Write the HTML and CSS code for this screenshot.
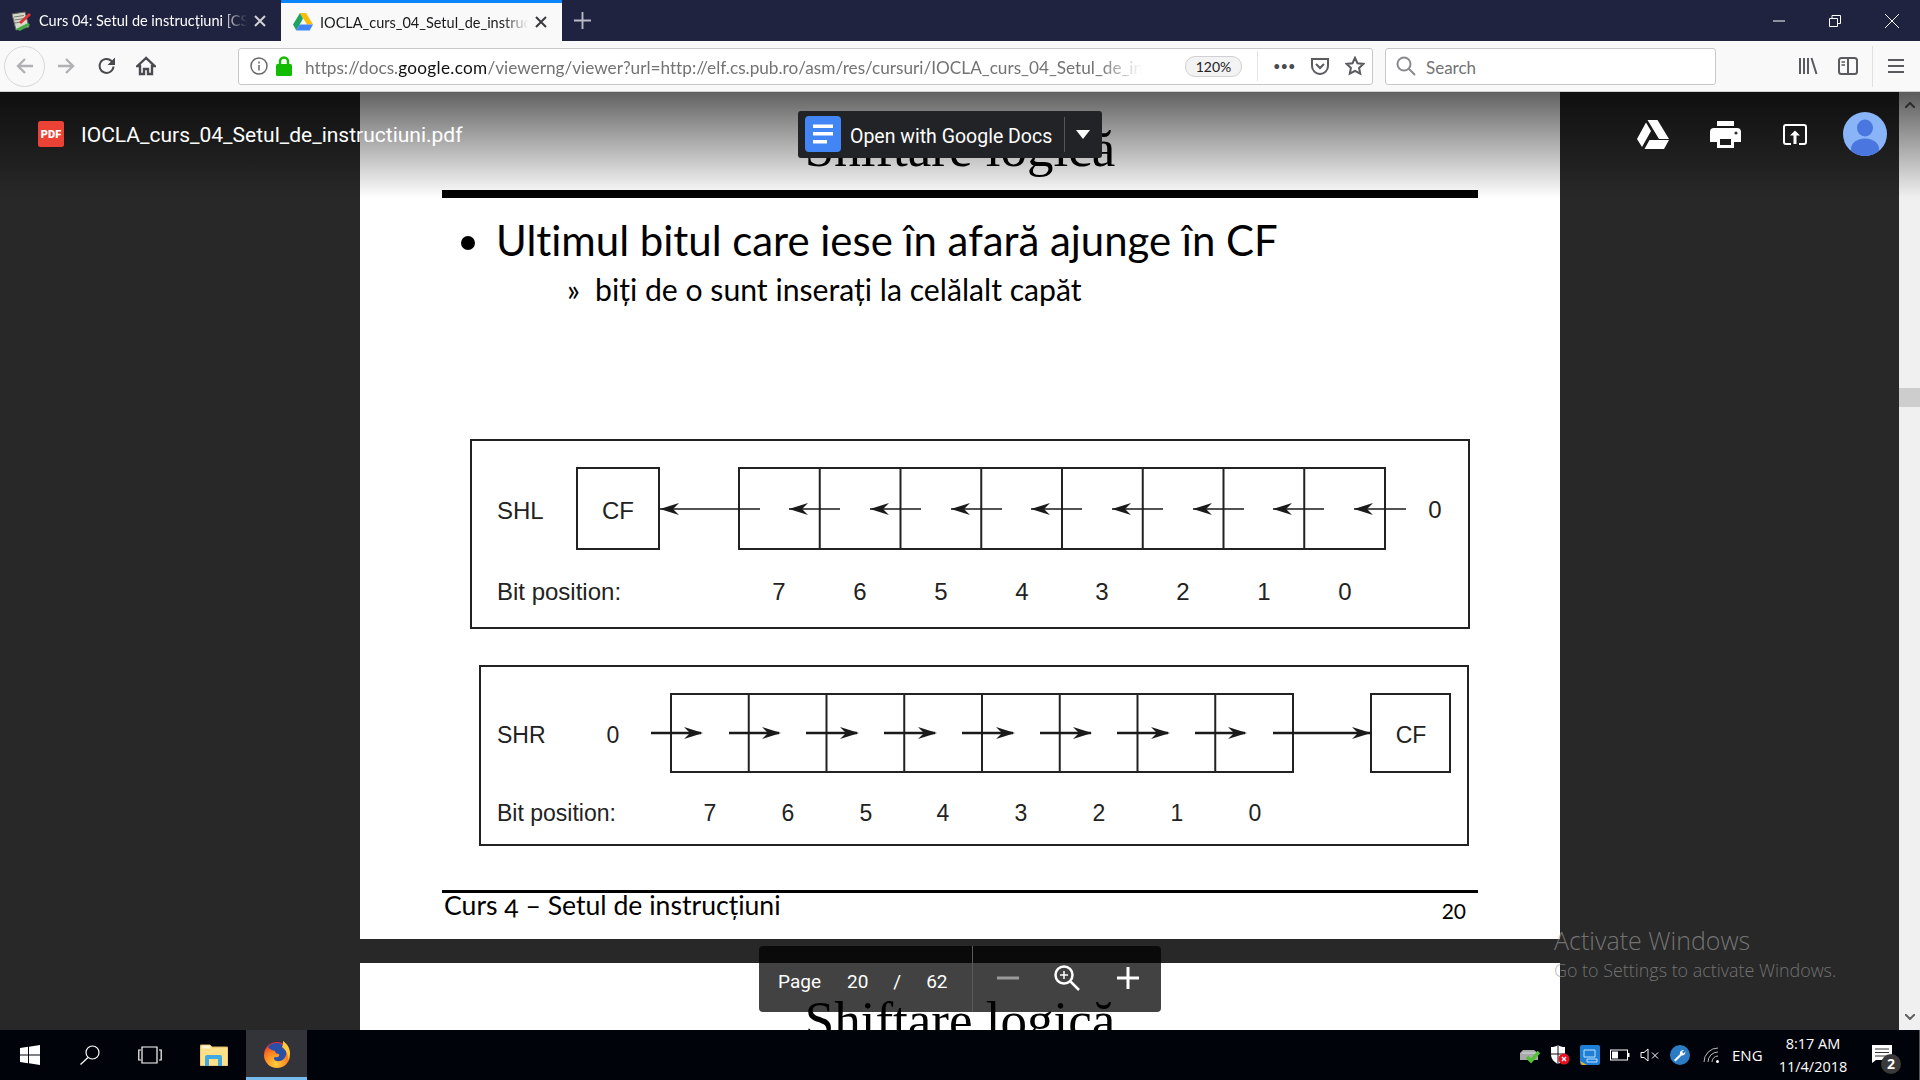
FILE: index.html
```html
<!DOCTYPE html>
<html lang="ro">

<head>
  <meta charset="UTF-8" />
  <title>IOCLA_curs_04_Setul_de_instructiuni.pdf</title>
  <link rel="stylesheet" href="styles.css">
</head>

<body>
  <!-- Firefox tabs -->
  <div class="tab-bar">
    <div class="tab">
      <svg class="favicon" viewBox="0 0 20 20">
        <path d="M1 3l13-2 4 15-13 3z" fill="#d8d8c8" stroke="#666" />
        <path d="M3 6l10-1.500M3.500 9l10-1.500M4 12l6-1" stroke="#777" />
        <path d="M8 11l10-9 2 2-10 9z" fill="#d33" />
        <path d="M5 18l12-6 2 2-10 6z" fill="#4a4" />
      </svg>
      <span class="tab-title">Curs 04: Setul de instrucțiuni [CS Open CourseWare]</span>
      <svg class="tab-close" viewBox="0 0 12 12"><path d="M1 1l10 10M11 1L1 11" /></svg>
    </div>
    <div class="tab tab-active">
      <svg class="favicon" viewBox="0 0 20 18">
        <path d="M7 0h6l7 11.500h-6z" fill="#fbbc04" />
        <path d="M7 0l3 5.500L3.300 17.500 0 11.500z" fill="#1ea362" />
        <path d="M3.300 17.500L6.600 11.500H20l-3.300 6z" fill="#4285f4" />
      </svg>
      <span class="tab-title">IOCLA_curs_04_Setul_de_instructiuni.pdf</span>
      <svg class="tab-close" viewBox="0 0 12 12"><path d="M1 1l10 10M11 1L1 11" /></svg>
    </div>
    <svg class="new-tab" viewBox="0 0 18 18"><path d="M9 0v18M0 9h18" /></svg>
    <div class="window-buttons">
      <svg viewBox="0 0 12 12"><path d="M0 6h12" /></svg>
      <svg viewBox="0 0 12 12"><path d="M.5 3.500h8v8h-8zM3 3.500V.5h8.500v8H8.500" /></svg>
      <svg viewBox="0 0 14 14"><path d="M0 0l14 14M14 0L0 14" /></svg>
    </div>
  </div>

  <!-- Firefox toolbar -->
  <div class="nav-bar">
    <div class="back-btn">
      <svg class="nav-icon" viewBox="0 0 20 20"><path class="off" d="M18 10H3M10 3l-7 7 7 7" /></svg>
    </div>
    <svg class="nav-icon forward-icon" viewBox="0 0 20 20"><path class="off" d="M2 10h15M10 3l7 7-7 7" /></svg>
    <svg class="nav-icon reload-icon" viewBox="0 0 20 20">
      <path d="M16.500 10.500a7 7 0 1 1-2-5.500l2.500 2.500" />
      <path class="solid" d="M18 1.500V9h-7.500z" />
    </svg>
    <svg class="nav-icon home-icon" viewBox="0 0 20 20">
      <path d="M10 2L1.500 10h2.500v8h4v-5h4v5h4v-8h2.500z" />
    </svg>

    <div class="url-box">
      <svg class="info-icon" viewBox="0 0 18 18">
        <circle cx="9" cy="9" r="8" />
        <path d="M9 8v5.500M9 4.500v2" />
      </svg>
      <svg class="lock-icon" viewBox="0 0 16 20">
        <path d="M4 9V5.500a4 4 0 0 1 8 0V9" />
        <rect x="0" y="8" width="16" height="12" rx="1.500" />
      </svg>
      <span class="url-text">https://docs.<b>google.com</b>/viewerng/viewer?url=http://elf.cs.pub.ro/asm/res/cursuri/IOCLA_curs_04_Setul_de_instructiuni.pdf</span>
      <span class="zoom-pill">120%</span>
      <span class="url-sep"></span>
      <span class="more-dots">•••</span>
      <svg class="pocket-icon" viewBox="0 0 20 20">
        <path d="M2 3h16v7a8 8 0 0 1-16 0z" />
        <path d="M6 8l4 4 4-4" />
      </svg>
      <svg class="star-icon" viewBox="0 0 20 20">
        <path d="M10 1.800l2.500 5.400 5.900.7-4.300 4 1.100 5.800L10 14.800l-5.200 2.900 1.100-5.800-4.300-4 5.900-.7z" />
      </svg>
    </div>

    <div class="search-box">
      <svg class="search-icon" viewBox="0 0 20 20">
        <circle cx="8" cy="8" r="6.500" />
        <path d="M12.500 12.500l6.500 6.500" />
      </svg>
      <span>Search</span>
    </div>

    <svg class="tool-icon library-icon" viewBox="0 0 20 20"><path d="M2 2v16M6 2v16M10 2v16M13.500 2l5 16" /></svg>
    <svg class="tool-icon sidebar-icon" viewBox="0 0 20 20">
      <rect x="1" y="2" width="18" height="16" rx="2.500" />
      <path d="M10 2v16" />
      <path class="thin" d="M3.500 6H7M3.500 9H7" />
    </svg>
    <span class="tool-sep"></span>
    <svg class="tool-icon menu-icon" viewBox="0 0 16 16"><path d="M0 2h16M0 8h16M0 14h16" /></svg>
  </div>

  <!-- pdf viewer -->
  <div class="viewer">
    <div class="pages">
      <div class="page">
        <h1 class="slide-title">Shiftare logică</h1>
        <div class="slide-rule"></div>
        <div class="bullet-main">Ultimul bitul care iese în afară ajunge în CF</div>
        <div class="bullet-sub"><span class="sub-mark">»</span>biți de o sunt inserați la celălalt capăt</div>

        <svg class="figure figure-shl" viewBox="0 0 1000 190">
          <defs>
            <g id="head-left"><path d="M0 0l19-6-6 6 6 6z" /></g>
            <g id="head-right"><path d="M0 0l-19-6 6 6-6 6z" /></g>
          </defs>
          <rect class="frame" x="1" y="1" width="998" height="188" />
          <rect class="box" x="107" y="29" width="82" height="81" />
          <path class="box" d="M269 29h646v81H269zM349.750 29v81M430.500 29v81M511.250 29v81M592 29v81M672.750 29v81M753.500 29v81M834.250 29v81" />
          <path class="line" d="M189 70h101M319 70h51M400 70h51M481 70h51M561 70h51M642 70h51M723 70h51M803 70h51M884 70h52" />
          <use href="#head-left" x="190" y="70" />
          <use href="#head-left" x="319" y="70" />
          <use href="#head-left" x="400" y="70" />
          <use href="#head-left" x="481" y="70" />
          <use href="#head-left" x="561" y="70" />
          <use href="#head-left" x="642" y="70" />
          <use href="#head-left" x="723" y="70" />
          <use href="#head-left" x="803" y="70" />
          <use href="#head-left" x="884" y="70" />
          <text x="27" y="80">SHL</text>
          <text class="mid" x="148" y="80">CF</text>
          <text class="mid" x="965" y="79">0</text>
          <text x="27" y="161">Bit position:</text>
          <text class="mid" x="309" y="161">7</text>
          <text class="mid" x="390" y="161">6</text>
          <text class="mid" x="471" y="161">5</text>
          <text class="mid" x="552" y="161">4</text>
          <text class="mid" x="632" y="161">3</text>
          <text class="mid" x="713" y="161">2</text>
          <text class="mid" x="794" y="161">1</text>
          <text class="mid" x="875" y="161">0</text>
        </svg>

        <svg class="figure figure-shr" viewBox="0 0 1000 181">
          <rect class="frame" x="10" y="1" width="988" height="179" />
          <rect class="box" x="901" y="29" width="79" height="78" />
          <path class="box" d="M201 29h622v78H201zM278.750 29v78M356.500 29v78M434.250 29v78M512 29v78M589.750 29v78M667.500 29v78M745.250 29v78" />
          <path class="line thick" d="M181 68h50M259 68h50M336 68h51M414 68h51M492 68h51M570 68h51M647 68h51M725 68h50M803 68h98" />
          <use href="#head-right" x="233" y="68" />
          <use href="#head-right" x="311" y="68" />
          <use href="#head-right" x="389" y="68" />
          <use href="#head-right" x="467" y="68" />
          <use href="#head-right" x="545" y="68" />
          <use href="#head-right" x="622" y="68" />
          <use href="#head-right" x="700" y="68" />
          <use href="#head-right" x="777" y="68" />
          <use href="#head-right" x="901" y="68" />
          <text class="small" x="27" y="78">SHR</text>
          <text class="small mid" x="143" y="78">0</text>
          <text class="small mid" x="941" y="78">CF</text>
          <text class="small" x="27" y="156">Bit position:</text>
          <text class="small mid" x="240" y="156">7</text>
          <text class="small mid" x="318" y="156">6</text>
          <text class="small mid" x="396" y="156">5</text>
          <text class="small mid" x="473" y="156">4</text>
          <text class="small mid" x="551" y="156">3</text>
          <text class="small mid" x="629" y="156">2</text>
          <text class="small mid" x="707" y="156">1</text>
          <text class="small mid" x="785" y="156">0</text>
        </svg>

        <div class="slide-footer">
          <span class="footer-left">Curs 4 – Setul de instrucțiuni</span>
          <span class="footer-num">20</span>
        </div>
      </div>

      <div class="page">
        <h1 class="slide-title">Shiftare logică</h1>
      </div>
    </div>

    <div class="scroll-track">
      <svg class="scroll-arrow" viewBox="0 0 10 6"><path d="M0 6l5-5 5 5" /></svg>
      <div class="scroll-thumb"></div>
      <svg class="scroll-arrow" viewBox="0 0 10 6"><path d="M0 0l5 5 5-5" /></svg>
    </div>

    <div class="viewer-top">
      <div class="file-info">
        <svg class="pdf-icon" viewBox="0 0 26 26"><rect width="26" height="26" rx="2.500" /></svg>
        <span class="pdf-label">PDF</span>
        <span class="file-name">IOCLA_curs_04_Setul_de_instructiuni.pdf</span>
      </div>
      <div class="open-with">
        <svg class="docs-icon" viewBox="0 0 36 36">
          <rect width="36" height="36" rx="4" fill="#4285f4" />
          <path d="M8 8.500h20v3.500H8zM8 16h20v3.500H8zM8 24h14v3.500H8z" fill="#fff" />
        </svg>
        <span class="open-label">Open with Google Docs</span>
        <span class="open-sep"></span>
        <span class="open-caret"></span>
      </div>
      <div class="top-actions">
        <svg class="drive-icon" viewBox="0 0 32 29">
          <path d="M10.500 0h10L32 19H22z" />
          <path d="M9 2.500l5 8.500L5 27 0 19z" />
          <path d="M7.500 29l5-9H32l-5 9z" />
        </svg>
        <svg class="print-icon" viewBox="0 0 31 27">
          <path d="M7 0h17v5H7z" />
          <path fill-rule="evenodd" d="M4 7h23a4 4 0 0 1 4 4v10h-7v6H7v-6H0V11a4 4 0 0 1 4-4zm6 11v6h11v-6z" />
          <circle class="print-dot" cx="26" cy="12" r="1.600" />
        </svg>
        <svg class="open-icon" viewBox="0 0 24 21">
          <path d="M8 20H3a2 2 0 0 1-2-2V3a2 2 0 0 1 2-2h18a2 2 0 0 1 2 2v15a2 2 0 0 1-2 2h-5" />
          <path class="open-fill" d="M12 6.500l5 5h-3.500V20h-3v-8.500H7z" />
        </svg>
        <svg class="avatar" viewBox="0 0 44 44">
          <clipPath id="avatar-clip"><circle cx="22" cy="22" r="22" /></clipPath>
          <circle cx="22" cy="22" r="22" fill="#8ab4f8" />
          <g clip-path="url(#avatar-clip)" fill="#4a76e0">
            <ellipse cx="22" cy="16" rx="8" ry="8.500" />
            <ellipse cx="22" cy="37" rx="14" ry="10.500" />
          </g>
        </svg>
      </div>
    </div>

    <div class="page-controls">
      <div class="page-info">
        <span>Page</span>
        <span class="page-now">20</span>
        <span class="page-slash">/</span>
        <span>62</span>
      </div>
      <div class="zoom-tools">
        <svg class="zoom-minus" viewBox="0 0 22 4"><path d="M0 2h22" /></svg>
        <svg class="zoom-fit" viewBox="0 0 28 28">
          <circle cx="11" cy="11" r="8.500" />
          <path d="M17 17l9 9" />
          <path class="thin" d="M11 7v8M7 11h8" />
        </svg>
        <svg class="zoom-plus" viewBox="0 0 22 22"><path d="M11 0v22M0 11h22" /></svg>
      </div>
    </div>

    <div class="activate-note">
      <div class="activate-big">Activate Windows</div>
      <div class="activate-small">Go to Settings to activate Windows.</div>
    </div>
  </div>

  <!-- windows taskbar -->
  <div class="taskbar">
    <svg class="task-win" viewBox="0 0 20 20">
      <path d="M0 3l8-1.200v7.600H0zM9 1.700L20 0v9.400H9zM0 10.600h8v7.600L0 17zM9 10.600h11V20L9 18.300z" />
    </svg>
    <svg class="task-search" viewBox="0 0 20 20">
      <circle cx="12.500" cy="7.500" r="6.500" />
      <path d="M8 12.500L.5 19.500" />
    </svg>
    <svg class="task-view" viewBox="0 0 24 18">
      <path d="M4 1h15v16H4zM3 4H.8v10H3M21 4h2.200v10H21" />
    </svg>
    <svg class="task-folder" viewBox="0 0 28 22">
      <path d="M0 2a1 1 0 0 1 1-1h9l2 2h15a1 1 0 0 1 1 1v17a1 1 0 0 1-1 1H1a1 1 0 0 1-1-1z" fill="#ffe08a" stroke="#d9b35f" />
      <rect x="2" y="1.500" width="8" height="3" fill="#fff6d8" />
      <path d="M5 22v-9a2 2 0 0 1 2-2h13a2 2 0 0 1 2 2v9h-4v-7h-9v7z" fill="#3fa9e0" />
    </svg>
    <div class="task-firefox">
      <svg class="firefox-icon" viewBox="0 0 28 28">
        <defs>
          <radialGradient id="ff-glow" cx="45%" cy="85%" r="85%">
            <stop offset="0" stop-color="#ffcf3a" />
            <stop offset=".6" stop-color="#ff7a1f" />
            <stop offset="1" stop-color="#e2224a" />
          </radialGradient>
        </defs>
        <circle cx="14" cy="15" r="13" fill="url(#ff-glow)" />
        <path d="M5 7c3-4 9-5 13-3 4 2 6 6 5 11-1 4-5 7-9 6-3-.5-4-3-2-4 3 1 5-1 4-3-2 0-4-1-4-3-2-1-5-1-7-4z" fill="#2a4fa8" />
        <path d="M20 1c3 2 7 6 7 12 0 3-1 6-2 7 0-6-2-10-6-13 1-2 1-4 1-6z" fill="#ffc93a" />
      </svg>
    </div>

    <div class="tray">
      <svg class="tray-icon" viewBox="0 0 20 18">
        <path d="M3 4h11l4 3v7H0V7z" fill="#a9a9a9" />
        <path d="M2 7h14" stroke="#dcdcdc" />
        <path d="M7 11l4 4 8-9" fill="none" stroke="#52c234" stroke-width="3.500" />
      </svg>
      <svg class="tray-icon" viewBox="0 0 20 20">
        <path d="M8 0c2 1.500 4 2 7 2v7c0 5-3 8-7 10-4-2-7-5-7-10V2c3 0 5-.5 7-2z" fill="#fff" />
        <path d="M8 0v19M1 9h14" stroke="#111" />
        <circle cx="14" cy="14" r="5.500" fill="#e81123" />
        <path d="M12 12l4 4M16 12l-4 4" stroke="#fff" stroke-width="1.300" />
      </svg>
      <svg class="tray-icon" viewBox="0 0 20 20">
        <rect width="20" height="20" rx="2" fill="#1f7fd6" />
        <path d="M4 5h11v7H4zM7 14h10v3H7z" fill="none" stroke="#bfe3ff" />
        <path d="M0 16l2 4h5z" fill="#f2b01e" />
      </svg>
      <svg class="tray-icon" viewBox="0 0 20 12">
        <rect x=".5" y="1" width="17" height="10" fill="none" stroke="#fff" />
        <rect x="2" y="2.500" width="6" height="7" fill="#fff" />
        <rect x="18" y="4" width="1.500" height="4" fill="#fff" />
      </svg>
      <svg class="tray-icon" viewBox="0 0 20 14">
        <path d="M1 4.500h3L8 1v12L4 9.500H1z" fill="none" stroke="#fff" />
        <path d="M12 4.500l6 6M18 4.500l-6 6" stroke="#fff" />
      </svg>
      <svg class="tray-icon" viewBox="0 0 20 20">
        <circle cx="10" cy="10" r="10" fill="#2b7cc4" />
        <path d="M4 15l6-6c-.5-2 1-4 4-4l-2 2 1.500 1.500 2-2c0 3-2 4.500-4 4l-6 6z" fill="#fff" />
      </svg>
      <svg class="tray-icon tray-wifi" viewBox="0 0 18 16">
        <path d="M1 15A14 14 0 0 1 15 1M5 15A10 10 0 0 1 15 5M9 15a6 6 0 0 1 6-6" fill="none" stroke="#bbb" />
        <circle cx="14.500" cy="14.500" r="1.500" fill="#fff" />
      </svg>
      <span class="tray-lang">ENG</span>
      <div class="tray-clock">
        <div>8:17 AM</div>
        <div>11/4/2018</div>
      </div>
      <div class="tray-note">
        <svg class="note-icon" viewBox="0 0 20 18">
          <path d="M0 0h20v15H4l-4 3z" fill="#fff" />
          <path d="M3 4h14M3 7.500h14M3 11h14" stroke="#333" />
        </svg>
        <span class="note-badge">2</span>
      </div>
    </div>
  </div>
</body>

</html>
```

FILE: styles.css
```css
* {
  box-sizing: border-box;
}

html,
body {
  margin: 0;
  width: 1920px;
  height: 1080px;
  overflow: hidden;
  font-family: 'Lato', sans-serif;
  font-variant-ligatures: none;
}

body {
  display: flex;
  flex-direction: column;
}

svg {
  display: block;
  flex: none;
}

/* tabs */
.tab-bar {
  height: 41px;
  flex: none;
  display: flex;
  align-items: stretch;
  background: #202340;
  color: #fff;
}

.tab {
  width: 281px;
  display: flex;
  align-items: center;
  padding: 0 15px 0 11px;
  font-size: 14.500px;
}

.tab-active {
  width: 281px;
  padding-left: 12px;
  padding-right: 15px;
  background: #f9f9fa;
  border-top: 3px solid #0a84ff;
  color: #18191a;
}

.favicon {
  width: 20px;
  height: 20px;
  margin-right: 8px;
}

.tab-active .favicon {
  height: 18px;
  margin-right: 7px;
}

.tab-title {
  flex: 1;
  overflow: hidden;
  white-space: nowrap;
  -webkit-mask-image: linear-gradient(to right, #000 88%, transparent);
  mask-image: linear-gradient(to right, #000 88%, transparent);
}

.tab-close {
  width: 12px;
  height: 12px;
  margin-left: 7px;
  fill: none;
  stroke: #d0d0d6;
  stroke-width: 2;
}

.tab-active .tab-close {
  stroke: #3a3a3e;
}

.new-tab {
  width: 17px;
  height: 17px;
  margin: 12px 0 0 12px;
  fill: none;
  stroke: #b8bac6;
  stroke-width: 2;
}

.window-buttons {
  margin-left: auto;
  width: 148px;
  display: flex;
  align-items: center;
  padding: 0 21px 0 0;
  justify-content: flex-end;
  gap: 44px;
}

.window-buttons svg {
  width: 12px;
  height: 12px;
  fill: none;
  stroke: #fff;
}

.window-buttons svg:last-child {
  width: 14px;
  height: 14px;
}

/* toolbar */
.nav-bar {
  height: 51px;
  flex: none;
  display: flex;
  align-items: center;
  background: #f9f9fa;
  border-bottom: 1px solid #d0d0d2;
  position: relative;
}

.nav-icon {
  width: 20px;
  height: 20px;
  fill: none;
  stroke: #4a4a4f;
  stroke-width: 2;
}

.nav-icon .off {
  stroke: #b1b1b3;
  stroke-width: 2.400;
}

.nav-icon .solid {
  fill: #4a4a4f;
  stroke: none;
}

.back-btn {
  width: 41px;
  height: 41px;
  margin-left: 4px;
  border: 1px solid #d7d7d9;
  border-radius: 50%;
  display: flex;
  align-items: center;
  justify-content: center;
}

.forward-icon {
  margin-left: 11px;
}

.reload-icon {
  margin-left: 21px;
}

.home-icon {
  margin-left: 19px;
  stroke-width: 2.4;
}

.url-box {
  width: 1135px;
  height: 37px;
  margin-left: 82px;
  display: flex;
  align-items: center;
  background: #fff;
  border: 1px solid #c8c8ca;
  border-radius: 3px;
  padding-left: 11px;
}

.info-icon {
  width: 18px;
  height: 18px;
  fill: none;
  stroke: #6a6a6e;
  stroke-width: 1.500;
}

.lock-icon {
  width: 16px;
  height: 20px;
  margin-left: 8px;
  fill: #12bc00;
}

.lock-icon path {
  fill: none;
  stroke: #12bc00;
  stroke-width: 2.500;
}

.url-text {
  width: 837px;
  margin-left: 13px;
  padding-top: 2px;
  overflow: hidden;
  white-space: nowrap;
  font-size: 17.200px;
  color: #737373;
  -webkit-mask-image: linear-gradient(to right, #000 95%, transparent);
  mask-image: linear-gradient(to right, #000 95%, transparent);
}

.url-text b {
  font-weight: 400;
  letter-spacing: 0.3px;
  color: #111;
}

.zoom-pill {
  width: 57px;
  height: 21px;
  margin-left: 43px;
  border: 1px solid #d0d0d2;
  border-radius: 10px;
  background: #f3f3f4;
  font-size: 14px;
  line-height: 19px;
  text-align: center;
  color: #222;
}

.url-sep {
  width: 1px;
  height: 30px;
  margin-left: 15px;
  background: #e2e2e4;
}

.more-dots {
  margin-left: 15px;
  font-size: 13px;
  letter-spacing: 0;
  color: #4a4a4f;
}

.pocket-icon {
  width: 20px;
  height: 20px;
  margin-left: 14px;
  fill: none;
  stroke: #5a5a5f;
  stroke-width: 2;
}

.star-icon {
  width: 20px;
  height: 20px;
  margin-left: 15px;
  fill: none;
  stroke: #5a5a5f;
  stroke-width: 2;
}

.search-box {
  width: 331px;
  height: 37px;
  margin-left: 12px;
  display: flex;
  align-items: center;
  gap: 10px;
  background: #fff;
  border: 1px solid #c8c8ca;
  border-radius: 3px;
  padding-left: 10px;
  font-size: 17px;
  color: #737373;
}

.search-box span {
  padding-top: 2px;
}

.search-icon {
  width: 20px;
  height: 20px;
  fill: none;
  stroke: #8a8a8e;
  stroke-width: 2;
}

.tool-icon {
  fill: none;
  stroke: #5a5a5f;
  stroke-width: 2;
}

.library-icon {
  width: 20px;
  height: 20px;
  margin-left: 82px;
}

.sidebar-icon {
  width: 20px;
  height: 20px;
  margin-left: 20px;
}

.sidebar-icon .thin {
  stroke-width: 1.500;
}

.tool-sep {
  width: 1px;
  height: 41px;
  margin-left: 14px;
  background: #e0e0e2;
}

.menu-icon {
  width: 16px;
  height: 16px;
  margin-left: 15px;
}

/* viewer */
.viewer {
  flex: 1;
  min-height: 0;
  position: relative;
  display: flex;
  background: #282828;
  overflow: hidden;
}

.pages {
  flex: 1;
  padding-left: 360px;
  margin-top: -1px;
  display: flex;
  flex-direction: column;
  gap: 24px;
}

.page {
  width: 1200px;
  height: 848px;
  flex: none;
  background: #fff;
  color: #000;
  padding: 0 82px;
}

.slide-title {
  margin: 0;
  height: 99px;
  padding-top: 27px;
  font-family: 'Liberation Serif', serif;
  font-size: 53px;
  font-weight: 400;
  line-height: 60px;
  text-align: center;
}

.slide-rule {
  height: 8px;
  background: #000;
}

.bullet-main {
  margin-top: 17px;
  padding-left: 54px;
  position: relative;
  font-size: 41.900px;
  line-height: 50px;
  white-space: nowrap;
}

.bullet-main::before {
  content: "";
  position: absolute;
  left: 19px;
  top: 21px;
  width: 14px;
  height: 14px;
  border-radius: 50%;
  background: #000;
}

.bullet-sub {
  margin-top: 6px;
  padding-left: 125px;
  font-size: 30.200px;
  line-height: 36px;
  white-space: nowrap;
}

.sub-mark {
  display: inline-block;
  width: 28px;
}

.figure {
  display: block;
  width: 1000px;
  margin-left: 28px;
  overflow: visible;
}

.figure-shl {
  height: 190px;
  margin-top: 132px;
}

.figure-shr {
  height: 181px;
  margin-top: 36px;
}

.figure .frame,
.figure .box {
  fill: none;
  stroke: #222;
  stroke-width: 2;
}

.figure .line {
  fill: none;
  stroke: #1a1a1a;
  stroke-width: 1.500;
}

.figure .line.thick {
  stroke-width: 2.500;
}

.figure use {
  fill: #1a1a1a;
}

.figure text {
  font-family: 'Liberation Sans', sans-serif;
  font-size: 24px;
  fill: #222;
}

.figure text.small {
  font-size: 23px;
}

.figure text.mid {
  text-anchor: middle;
}

.slide-footer {
  margin-top: 44px;
  height: 40px;
  display: flex;
  justify-content: space-between;
  border-top: 3px solid #000;
  font-size: 26.600px;
  line-height: 24px;
}

.footer-left {
  padding-left: 2px;
  font-variant-numeric: oldstyle-nums;
}

.footer-num {
  margin: 6px 12px 0 0;
  font-size: 21px;
}

/* viewer toolbar */
.viewer-top {
  position: absolute;
  left: 0;
  right: 0;
  top: 0;
  height: 106px;
  padding-bottom: 22px;
  display: flex;
  align-items: center;
  background: linear-gradient(rgba(0, 0, 0, 0.62), rgba(0, 0, 0, 0));
  color: #fff;
  font-family: 'Roboto', sans-serif;
}

.file-info {
  width: 798px;
  flex: none;
  padding-left: 38px;
  display: flex;
  align-items: center;
  position: relative;
}

.pdf-icon {
  width: 26px;
  height: 26px;
  fill: #ea4335;
}

.pdf-label {
  position: absolute;
  left: 38px;
  width: 26px;
  text-align: center;
  font-size: 11px;
  font-weight: 900;
}

.file-name {
  margin-left: 17px;
  padding-top: 2px;
  font-size: 21px;
  white-space: nowrap;
}

.open-with {
  width: 304px;
  height: 47px;
  display: flex;
  align-items: center;
  padding-left: 7px;
  background: #222326;
  border-radius: 3px;
  font-size: 19.500px;
}

.docs-icon {
  width: 36px;
  height: 36px;
}

.open-label {
  width: 214px;
  margin-left: 9px;
  padding-top: 4px;
  white-space: nowrap;
}

.open-sep {
  width: 1px;
  height: 35px;
  background: #555;
}

.open-caret {
  margin-left: 11px;
  border-left: 7px solid transparent;
  border-right: 7px solid transparent;
  border-top: 9px solid #fff;
}

.top-actions {
  margin-left: auto;
  padding-right: 33px;
  display: flex;
  align-items: center;
}

.drive-icon {
  width: 32px;
  height: 29px;
  fill: #fff;
}

.print-icon {
  width: 31px;
  height: 27px;
  margin-left: 41px;
  fill: #fff;
}

.print-dot {
  fill: #333;
}

.open-icon {
  width: 24px;
  height: 21px;
  margin-left: 42px;
  fill: none;
  stroke: #fff;
  stroke-width: 2;
}

.open-fill {
  fill: #fff;
  stroke: none;
}

.avatar {
  width: 44px;
  height: 44px;
  margin-left: 36px;
}

/* page number pill */
.page-controls {
  position: absolute;
  left: 759px;
  top: 854px;
  width: 402px;
  height: 66px;
  display: flex;
  background: rgba(0, 0, 0, 0.74);
  border-radius: 4px;
  color: #fff;
  font-family: 'Roboto', sans-serif;
  font-size: 19px;
}

.page-info {
  width: 214px;
  padding: 24px 0 0 19px;
  display: flex;
  gap: 26px;
  border-right: 1px solid #5a5a5a;
}

.page-info span {
  line-height: 24px;
}

.page-slash {
  margin: 0 -1px;
}

.zoom-tools {
  flex: 1;
  display: flex;
  align-items: center;
  padding: 0 0 2px 24px;
}

.zoom-minus {
  width: 22px;
  height: 4px;
  fill: none;
  stroke: #9a9a9a;
  stroke-width: 3;
}

.zoom-fit {
  width: 28px;
  height: 28px;
  margin-left: 34px;
  fill: none;
  stroke: #fff;
  stroke-width: 2.500;
}

.zoom-fit .thin {
  stroke-width: 1.500;
}

.zoom-plus {
  width: 22px;
  height: 22px;
  margin-left: 36px;
  fill: none;
  stroke: #fff;
  stroke-width: 3;
}

/* scrollbar */
.scroll-track {
  width: 21px;
  flex: none;
  display: flex;
  flex-direction: column;
  align-items: center;
  justify-content: space-between;
  padding: 10px 0;
  background: #f0f0f0;
  position: relative;
}

.scroll-arrow {
  width: 10px;
  height: 6px;
  fill: none;
  stroke: #606060;
  stroke-width: 2;
}

.scroll-thumb {
  position: absolute;
  left: 0;
  top: 296px;
  width: 21px;
  height: 19px;
  background: #cdcdcd;
}

/* watermark */
.activate-note {
  position: absolute;
  left: 1554px;
  top: 830px;
  color: rgba(150, 150, 150, 0.7);
  font-family: 'Open Sans', sans-serif;
  font-weight: 300;
  white-space: nowrap;
  pointer-events: none;
}

.activate-big {
  font-size: 25px;
  line-height: 36px;
}

.activate-small {
  font-size: 17.900px;
  line-height: 24px;
}

/* taskbar */
.taskbar {
  height: 50px;
  flex: none;
  display: flex;
  align-items: center;
  background: #01030a;
  color: #fff;
  font-family: 'Open Sans', sans-serif;
}

.task-win {
  width: 20px;
  height: 20px;
  margin-left: 20px;
  fill: #fff;
}

.task-search {
  width: 20px;
  height: 20px;
  margin-left: 40px;
  fill: none;
  stroke: #fff;
  stroke-width: 1.200;
}

.task-view {
  width: 24px;
  height: 18px;
  margin-left: 38px;
  fill: none;
  stroke: #fff;
  stroke-width: 1.200;
}

.task-folder {
  width: 28px;
  height: 22px;
  margin-left: 38px;
}

.task-firefox {
  width: 61px;
  height: 50px;
  margin-left: 18px;
  display: flex;
  align-items: center;
  justify-content: center;
  background: #33343a;
  border-bottom: 3px solid #76b9ed;
}

.firefox-icon {
  width: 28px;
  height: 28px;
}

.tray {
  margin-left: auto;
  height: 50px;
  padding-right: 17px;
  display: flex;
  align-items: center;
  border-right: 1px solid #555;
}

.tray-icon {
  width: 20px;
  height: 20px;
  margin-right: 10px;
}

.tray-wifi {
  width: 18px;
  margin: 0 11px 0 3px;
}

.tray-lang {
  width: 39px;
  font-size: 15px;
}

.tray-clock {
  width: 84px;
  font-size: 14.500px;
  line-height: 23px;
  text-align: center;
}

.tray-note {
  width: 35px;
  height: 50px;
  position: relative;
  margin-left: 12px;
}

.note-icon {
  position: absolute;
  left: 5px;
  top: 15px;
  width: 20px;
  height: 18px;
}

.note-badge {
  position: absolute;
  left: 14px;
  top: 24px;
  width: 20px;
  height: 20px;
  border-radius: 50%;
  background: #3a3a3a;
  font-size: 14px;
  font-weight: 700;
  line-height: 20px;
  text-align: center;
}
```
